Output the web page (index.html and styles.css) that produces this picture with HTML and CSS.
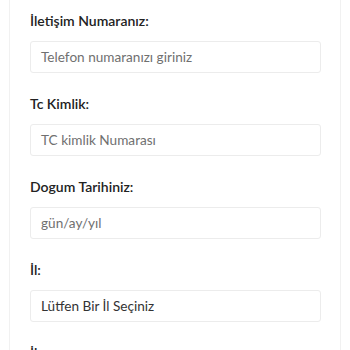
FILE: index.html
```html
<!DOCTYPE html>
<html lang="tr">
<head>
<meta charset="utf-8">
<link rel="stylesheet" href="styles.css">
</head>
<body>
<div class="card">
  <div class="field">
    <label class="label">İletişim Numaranız:</label>
    <div class="input placeholder">Telefon numaranızı giriniz</div>
  </div>
  <div class="field">
    <label class="label">Tc Kimlik:</label>
    <div class="input placeholder">TC kimlik Numarası</div>
  </div>
  <div class="field">
    <label class="label">Dogum Tarihiniz:</label>
    <div class="input placeholder">gün/ay/yıl</div>
  </div>
  <div class="field">
    <label class="label">İl:</label>
    <div class="input value">Lütfen Bir İl Seçiniz</div>
  </div>
  <div class="field">
    <label class="label">İlçe:</label>
    <div class="input value">Lütfen Bir İlçe Seçiniz</div>
  </div>
</div>
</body>
</html>
```
FILE: styles.css
```css
html, body {
  margin: 0;
  padding: 0;
  background: #ffffff;
  height: 350px;
  overflow: hidden;
}
body {
  font-family: Lato, "Noto Sans", sans-serif;
  padding: 0 9px;
}
.card {
  border-left: 1px solid #f1f1f1;
  border-right: 1px solid #f1f1f1;
  padding: 11px 19px 0 20px;
  display: flex;
  flex-direction: column;
  gap: 21px;
}
.field {
  display: flex;
  flex-direction: column;
  gap: 10px;
}
.label {
  font-size: 14px;
  font-weight: 600;
  color: #222222;
  line-height: 20px;
}
.input {
  height: 32px;
  box-sizing: border-box;
  border: 1px solid #ececec;
  border-radius: 3px;
  padding: 0 10px;
  display: flex;
  align-items: center;
  font-size: 13.6px;
}
.placeholder { color: #707070; }
.value { color: #333333; }
```
